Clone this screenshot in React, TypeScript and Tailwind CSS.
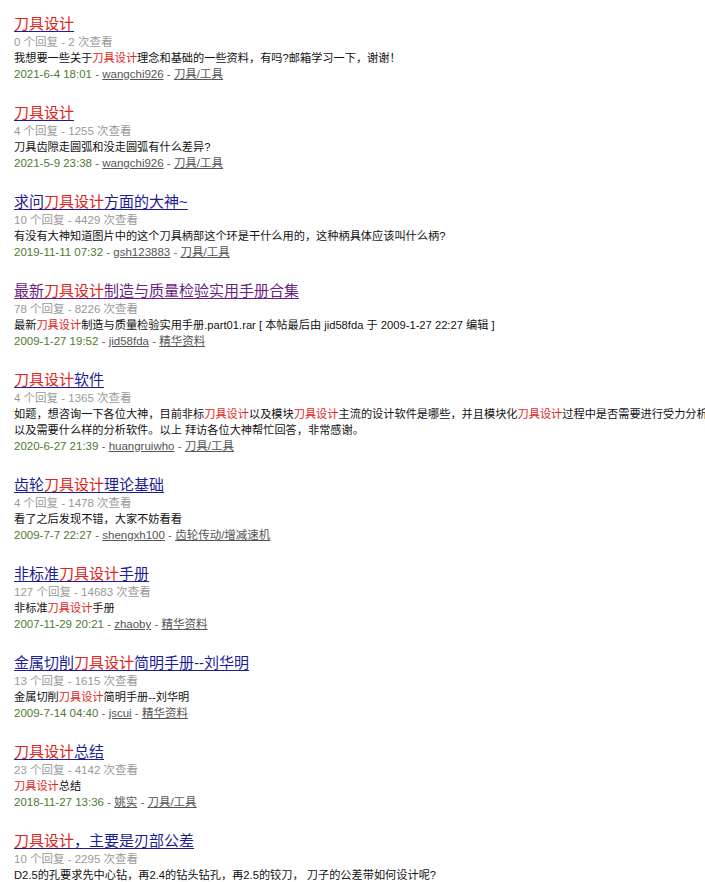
import React from "react";

type Seg = string | { h: string };

interface Item {
  title: Seg[];
  visited?: boolean;
  stats: string;
  desc: Seg[][];
  date: string;
  author: string;
  forum: string;
}

const H = "刀具设计";

const items: Item[] = [
  {
    title: [{ h: H }],
    stats: "0 个回复 - 2 次查看",
    desc: [["我想要一些关于", { h: H }, "理念和基础的一些资料，有吗?邮箱学习一下，谢谢！"]],
    date: "2021-6-4 18:01",
    author: "wangchi926",
    forum: "刀具/工具",
  },
  {
    title: [{ h: H }],
    stats: "4 个回复 - 1255 次查看",
    desc: [["刀具齿隙走圆弧和没走圆弧有什么差异?"]],
    date: "2021-5-9 23:38",
    author: "wangchi926",
    forum: "刀具/工具",
  },
  {
    title: ["求问", { h: H }, "方面的大神~"],
    stats: "10 个回复 - 4429 次查看",
    desc: [["有没有大神知道图片中的这个刀具柄部这个环是干什么用的，这种柄具体应该叫什么柄?"]],
    date: "2019-11-11 07:32",
    author: "gsh123883",
    forum: "刀具/工具",
  },
  {
    title: ["最新", { h: H }, "制造与质量检验实用手册合集"],
    visited: true,
    stats: "78 个回复 - 8226 次查看",
    desc: [["最新", { h: H }, "制造与质量检验实用手册.part01.rar [ 本帖最后由 jid58fda 于 2009-1-27 22:27 编辑 ]"]],
    date: "2009-1-27 19:52",
    author: "jid58fda",
    forum: "精华资料",
  },
  {
    title: [{ h: H }, "软件"],
    stats: "4 个回复 - 1365 次查看",
    desc: [
      [
        "如题，想咨询一下各位大神，目前非标",
        { h: H },
        "以及模块",
        { h: H },
        "主流的设计软件是哪些，并且模块化",
        { h: H },
        "过程中是否需要进行受力分析，",
      ],
      ["以及需要什么样的分析软件。以上 拜访各位大神帮忙回答，非常感谢。"],
    ],
    date: "2020-6-27 21:39",
    author: "huangruiwho",
    forum: "刀具/工具",
  },
  {
    title: ["齿轮", { h: H }, "理论基础"],
    stats: "4 个回复 - 1478 次查看",
    desc: [["看了之后发现不错，大家不妨看看"]],
    date: "2009-7-7 22:27",
    author: "shengxh100",
    forum: "齿轮传动/增减速机",
  },
  {
    title: ["非标准", { h: H }, "手册"],
    stats: "127 个回复 - 14683 次查看",
    desc: [["非标准", { h: H }, "手册"]],
    date: "2007-11-29 20:21",
    author: "zhaoby",
    forum: "精华资料",
  },
  {
    title: ["金属切削", { h: H }, "简明手册--刘华明"],
    stats: "13 个回复 - 1615 次查看",
    desc: [["金属切削", { h: H }, "简明手册--刘华明"]],
    date: "2009-7-14 04:40",
    author: "jscui",
    forum: "精华资料",
  },
  {
    title: [{ h: H }, "总结"],
    stats: "23 个回复 - 4142 次查看",
    desc: [[{ h: H }, "总结"]],
    date: "2018-11-27 13:36",
    author: "姚实",
    forum: "刀具/工具",
  },
  {
    title: [{ h: H }, "，主要是刃部公差"],
    stats: "10 个回复 - 2295 次查看",
    desc: [["D2.5的孔要求先中心钻，再2.4的钻头钻孔，再2.5的铰刀， 刀子的公差带如何设计呢?"]],
    date: "2021-3-2 10:15",
    author: "cnc2021",
    forum: "刀具/工具",
  },
];

function Title({ segs, visited }: { segs: Seg[]; visited?: boolean }) {
  return (
    <div className="h-[20px] text-[15px] leading-[20px]">
      <a className={`underline underline-offset-2 ${visited ? "text-[#6b1f86]" : "text-[#1c1c96]"}`}>
        {segs.map((s, i) =>
          typeof s === "string" ? (
            <span key={i}>{s}</span>
          ) : (
            <span key={i} className="text-[#e2231a]">
              {s.h}
            </span>
          )
        )}
      </a>
    </div>
  );
}

function Desc({ segs }: { segs: Seg[] }) {
  return (
    <div className="h-[16px] text-[11.2px] leading-[16px] text-[#111] whitespace-nowrap">
      {segs.map((s, i) =>
        typeof s === "string" ? (
          <span key={i}>{s}</span>
        ) : (
          <span key={i} className="text-[#e2231a]">
            {s.h}
          </span>
        )
      )}
    </div>
  );
}

export default function App() {
  return (
    <div
      className="w-full overflow-hidden bg-white"
      style={{ fontFamily: '"Liberation Sans", "Noto Sans CJK SC", sans-serif' }}
    >
      <div className="flex flex-col gap-[21px] pl-[14px] pt-[14px]">
        {items.map((it, idx) => (
          <div key={idx} className="flex flex-col">
            <Title segs={it.title} visited={it.visited} />
            <div className="h-[16px] text-[11.5px] leading-[16px] text-[#999]">{it.stats}</div>
            {it.desc.map((d, j) => (
              <Desc key={j} segs={d} />
            ))}
            <div className="h-[16px] text-[11.5px] leading-[16px] text-[#666] whitespace-nowrap">
              <span className="text-[#4e7a2e]">{it.date}</span>
              <span> - </span>
              <a className="underline text-[#555]">{it.author}</a>
              <span> - </span>
              <a className="underline text-[#555]">{it.forum}</a>
            </div>
          </div>
        ))}
      </div>
    </div>
  );
}
